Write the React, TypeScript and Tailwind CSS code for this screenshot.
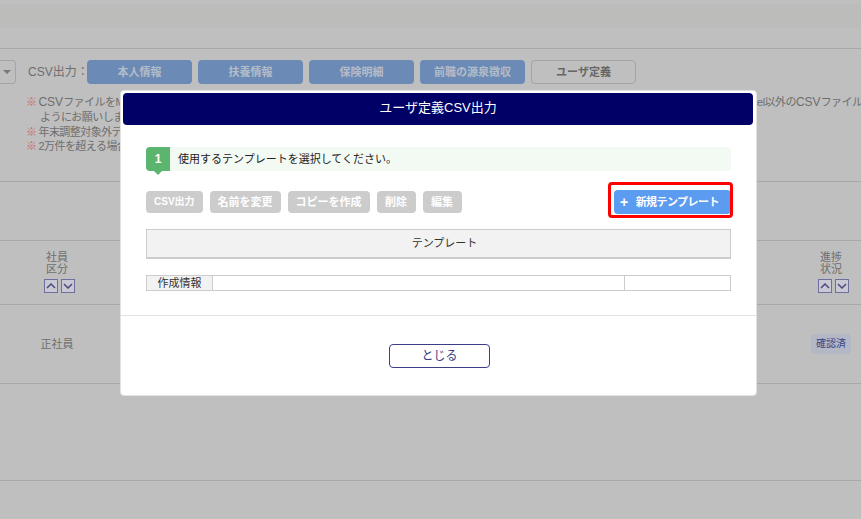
const font = { fontFamily: '"Liberation Sans", "Noto Sans CJK JP", sans-serif' };

function SortButtons() {
  return (
    <div className="flex justify-center gap-[3px] pl-1">
      <span className="flex h-3.5 w-3.5 items-center justify-center border border-[#6f6f9f] bg-[#c9c9d6]">
        <svg width="10" height="6" viewBox="0 0 10 6" fill="none" stroke="#4a4a7a" strokeWidth="1.5"><path d="M1 5l4-4 4 4" /></svg>
      </span>
      <span className="flex h-3.5 w-3.5 items-center justify-center border border-[#6f6f9f] bg-[#c9c9d6]">
        <svg width="10" height="6" viewBox="0 0 10 6" fill="none" stroke="#4a4a7a" strokeWidth="1.5"><path d="M1 1l4 4 4-4" /></svg>
      </span>
    </div>
  );
}

function CsvButton({ label }: { label: string }) {
  return (
    <span className="flex h-6 w-[105px] items-center justify-center rounded bg-[#6c8ab6] text-[11px] font-bold text-[#b4bcc8]">
      {label}
    </span>
  );
}

function ToolButton({ label }: { label: string }) {
  return (
    <span className="flex h-5.5 min-w-[39px] items-center justify-center rounded bg-[#cccccc] px-2 text-[11px] font-bold text-white">
      {label}
    </span>
  );
}

function Note({ children }: { children: React.ReactNode }) {
  return (
    <p className="whitespace-nowrap">
      <span className="mr-0.5 text-[#c86a6a]">※</span>
      {children}
    </p>
  );
}

export default function App() {
  return (
    <div className="relative h-[519px] w-[861px] overflow-hidden bg-[#bfbfbf] text-xs text-[#6e6e6e]" style={font}>
      <div className="h-[49px] border-b border-[#a8a8a8] pt-1">
        <div className="h-6 bg-[#bcbdbb]" />
      </div>

      <div className="flex items-center pt-[11px]">
        <span className="flex h-6 w-4 items-center justify-end rounded-r border border-l-0 border-[#a5a5a5] pr-1">
          <span className="border-x-4 border-t-4 border-x-transparent border-t-[#777777]" />
        </span>
        <span className="ml-3 w-[59px] whitespace-nowrap">CSV出力：</span>
        <div className="flex gap-1.5">
          <CsvButton label="本人情報" />
          <CsvButton label="扶養情報" />
          <CsvButton label="保険明細" />
          <CsvButton label="前職の源泉徴収" />
          <span className="flex h-6 w-[105px] items-center justify-center rounded border border-[#a5a5a5] text-[11px] font-bold text-[#666666]">
            ユーザ定義
          </span>
        </div>
      </div>

      <div className="h-[98px] border-b border-[#a8a8a8] pl-6.5 pt-2.5 text-[11px] leading-[14px] tracking-tighter">
        <Note>
          <span className="text-xs tracking-normal">CSV</span>ファイルをMicrosoft Excelで編集して保存すると、環境によっては データの形式が自動変更されて 正しく取り込めない場合がありますので、必ず Excel以外の<span className="text-xs tracking-normal">CSV</span>ファイル編集ソフトをご利用いただく
        </Note>
        <p className="pl-3.5">ようにお願いします。</p>
        <div className="mt-px">
          <Note>年末調整対象外データは出力されません。</Note>
          <Note>2万件を超える場合は分割して出力してください。</Note>
        </div>
      </div>

      <div className="mt-[58px] flex h-[65px] justify-between border-y border-[#a8a8a8] pt-2.5 text-[11px] leading-3">
        <div className="w-[114px] text-center">
          <p>社員</p>
          <p className="mb-1">区分</p>
          <SortButtons />
        </div>
        <div className="w-15 text-center">
          <p>進捗</p>
          <p className="mb-1">状況</p>
          <SortButtons />
        </div>
      </div>

      <div className="flex h-[79px] items-center justify-between border-b border-[#a8a8a8] text-[11px]">
        <span className="w-[114px] text-center">正社員</span>
        <span className="mr-2.5 flex h-5 w-10 items-center justify-center rounded bg-[#b3b7c6] text-[10px] text-[#3c4684]">確認済</span>
      </div>

      <div className="mt-24 border-b border-[#a8a8a8]" />

      <div className="absolute left-[120px] top-[90px] flex h-[306px] w-[637px] flex-col rounded-sm border border-[#e2e2e2] bg-white text-[#333333]">
        <div className="ml-0.5 mr-[3px] mt-0.5 flex h-8 items-center justify-center rounded-sm bg-[#000066] pb-0.5 text-[13px] text-white">
          ユーザ定義CSV出力
        </div>

        <div className="flex flex-col px-[25px] pt-5.5">
          <div className="flex h-6 items-center rounded-sm bg-[#f3f9f3]">
            <span className="relative flex h-6 w-6 items-center justify-center rounded-l-sm bg-[#5cb56e] text-xs font-bold text-white">
              1
              <span className="absolute -bottom-1 left-2 border-x-4 border-t-4 border-x-transparent border-t-[#5cb56e]" />
            </span>
            <span className="ml-2 text-[11px] text-[#222222]">使用するテンプレートを選択してください。</span>
          </div>

          <div className="mt-[19px] flex items-center gap-[7px]">
            <span className="flex h-5.5 items-center rounded bg-[#cccccc] px-2 text-[10px] font-bold text-white">CSV出力</span>
            <ToolButton label="名前を変更" />
            <ToolButton label="コピーを作成" />
            <ToolButton label="削除" />
            <ToolButton label="編集" />
            <span className="relative ml-auto flex h-6 w-[117px] items-center gap-2 rounded-sm bg-[#5b9bf0] pl-1.5 text-[11px] font-bold tracking-tighter text-white">
              <span className="text-sm leading-none">+</span>
              新規テンプレート
              <span className="absolute -bottom-1 -left-1.5 -right-0.5 -top-2 rounded-sm border-[3px] border-[#ff0000]" />
            </span>
          </div>

          <div className="mt-[15px] flex h-7.5 items-center justify-center border border-b-2 border-[#cccccc] bg-[#f2f2f2] pl-3 text-[11px]">
            テンプレート
          </div>

          <div className="mt-4 flex h-4 border border-[#cccccc] text-[11px] leading-3.5">
            <span className="w-[66px] shrink-0 border-r border-[#cccccc] bg-[#f2f2f2] text-center">作成情報</span>
            <span className="flex-1 border-r border-[#cccccc]" />
            <span className="w-[105px] shrink-0" />
          </div>
        </div>

        <div className="mt-6 border-t border-[#e2e2e2]" />

        <div className="flex justify-center pt-7">
          <span className="ml-0.5 flex h-6 w-[101px] items-center justify-center rounded-sm border border-[#3d3d85] text-xs text-[#3d3d85]">
            とじる
          </span>
        </div>
      </div>
    </div>
  );
}
